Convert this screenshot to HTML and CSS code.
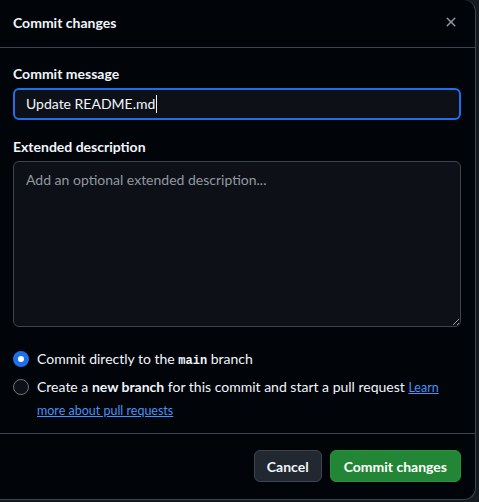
FILE: index.html
```html
<!DOCTYPE html>
<html lang="en">
<head>
<meta charset="utf-8">
<title>Commit changes</title>
<link rel="stylesheet" href="styles.css">
</head>
<body>
<div class="dialog">
  <div class="header">
    <h1 class="title">Commit changes</h1>
    <button class="close" aria-label="Close">
      <svg width="16" height="16" viewBox="0 0 16 16"><path fill="currentColor" d="M3.72 3.72a.75.75 0 0 1 1.06 0L8 6.94l3.22-3.22a.749.749 0 0 1 1.275.326.749.749 0 0 1-.215.734L9.06 8l3.22 3.22a.749.749 0 0 1-.326 1.275.749.749 0 0 1-.734-.215L8 9.06l-3.22 3.22a.751.751 0 0 1-1.042-.018.751.751 0 0 1-.018-1.042L6.94 8 3.72 4.78a.75.75 0 0 1 0-1.06Z"/></svg>
    </button>
  </div>
  <div class="body">
    <label class="label">Commit message</label>
    <div class="input"><span class="value">Update README.md</span><span class="caret"></span></div>
    <label class="label label-2">Extended description</label>
    <textarea class="textarea" placeholder="Add an optional extended description..."></textarea>
    <div class="options">
      <div class="option">
        <span class="radio checked"></span>
        <span class="option-text">Commit directly to the <code class="mono">main</code> branch</span>
      </div>
      <div class="option">
        <span class="radio"></span>
        <span class="option-text">Create a <b>new branch</b> for this commit and start a pull request <a class="link" href="#">Learn more about pull requests</a></span>
      </div>
    </div>
  </div>
  <div class="footer">
    <button class="btn btn-cancel">Cancel</button>
    <button class="btn btn-primary">Commit changes</button>
  </div>
</div>
</body>
</html>
```

FILE: styles.css
```css
* { box-sizing: border-box; }
html, body { margin: 0; padding: 0; }
body {
  background: #151a21;
  font-family: Lato, "Liberation Sans", sans-serif;
  font-size: 14px;
  color: #f0f6fc;
  height: 502px;
  overflow: hidden;
}
.dialog {
  width: 476px;
  height: 500px;
  background: #010409;
  border-right: 1px solid #3d444d;
  border-bottom: 1px solid #3d444d;
  border-radius: 0 12px 12px 0;
  display: flex;
  flex-direction: column;
}
.header {
  height: 48px;
  border-bottom: 1px solid #3d444d;
  display: flex;
  align-items: center;
  justify-content: space-between;
  padding: 0 12px 0 13px;
}
.title {
  margin: 0;
  font-size: 14px;
  font-weight: 700;
  line-height: 20px;
  padding-bottom: 2px;
}
.close {
  background: none;
  border: 0;
  color: #9198a1;
  width: 24px;
  height: 24px;
  padding: 4px;
  display: flex;
  align-items: center;
  justify-content: center;
  margin-bottom: 4px;
}
.body {
  flex: 1;
  padding: 16px 14px 0 13px;
  display: flex;
  flex-direction: column;
}
.label {
  font-weight: 700;
  line-height: 20px;
  margin-bottom: 4px;
}
.label-2 { margin-top: 17px; }
.input {
  height: 32px;
  border: 2px solid #1f6feb;
  border-radius: 6px;
  background: #0d1117;
  display: flex;
  align-items: center;
  padding-left: 11px;
  line-height: 20px;
}
.caret {
  width: 1px;
  height: 18px;
  background: #f0f6fc;
  margin-left: 1px;
}
.textarea {
  height: 166px;
  border: 1px solid #3d444d;
  border-radius: 6px;
  background: #0d1117;
  color: #f0f6fc;
  font: inherit;
  line-height: 20px;
  padding: 8px 12px;
  resize: vertical;
  outline: none;
}
.textarea::placeholder { color: #9198a1; opacity: 1; }
.options {
  margin-top: 21px;
  display: flex;
  flex-direction: column;
  gap: 4px;
}
.option {
  display: flex;
  align-items: flex-start;
  gap: 8px;
}
.option-text {
  line-height: 22px;
}
.radio {
  flex: none;
  width: 16px;
  height: 16px;
  border-radius: 50%;
  border: 1px solid #6b737d;
  background: #0d1117;
  margin-top: 3px;
}
.radio.checked {
  border: 5px solid #1f6feb;
  background: #ffffff;
}
.mono {
  font-family: "Liberation Mono", monospace;
  font-size: 12px;
  font-weight: 700;
}
.link {
  color: #4493f8;
  text-decoration: underline;
  font-size: 12.5px;
}
.footer {
  border-top: 1px solid #3d444d;
  padding: 16px 14px 16px 16px;
  display: flex;
  justify-content: flex-end;
  gap: 8px;
  height: 66px;
}
.btn {
  height: 32px;
  border-radius: 6px;
  font: inherit;
  font-weight: 700;
  padding: 0 12px;
  color: #f0f6fc;
}
.btn-cancel {
  background: #212830;
  border: 1px solid #3d444d;
}
.btn-primary {
  background: #238636;
  border: 1px solid #29903b;
  color: #ffffff;
  padding: 0 13px;
}
```
